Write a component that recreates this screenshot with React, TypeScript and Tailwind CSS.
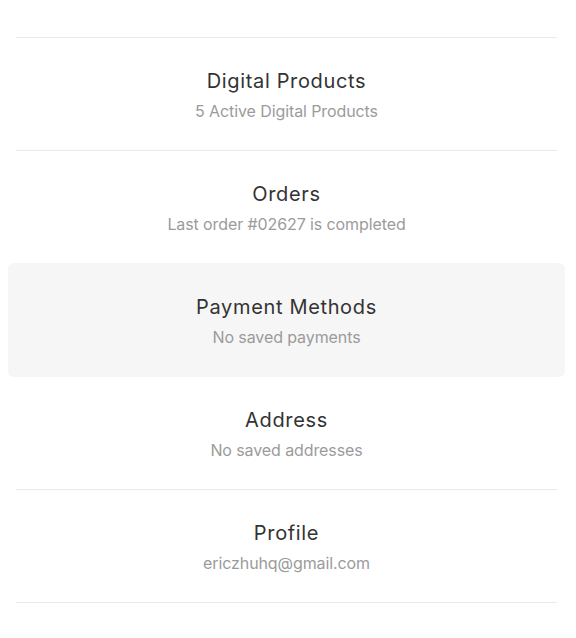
import React from "react";

type Item = { title: string; sub: string; active?: boolean };

const items: Item[] = [
  { title: "Digital Products", sub: "5 Active Digital Products" },
  { title: "Orders", sub: "Last order #02627 is completed" },
  { title: "Payment Methods", sub: "No saved payments", active: true },
  { title: "Address", sub: "No saved addresses" },
  { title: "Profile", sub: "ericzhuhq@gmail.com" },
];

function Content({ item }: { item: Item }) {
  return (
    <div className="flex flex-col items-center justify-center gap-1 h-full pt-[2px] cursor-pointer">
      <div className="text-[20px] leading-[28px] tracking-[0.65px] text-[#333333]">{item.title}</div>
      <div className="text-[16px] leading-[24px] tracking-[-0.1px] text-[#9b9b9b]">{item.sub}</div>
    </div>
  );
}

export default function App() {
  const nodes: React.ReactNode[] = [];
  items.forEach((item, i) => {
    const prevActive = i > 0 && items[i - 1].active;
    if (item.active) {
      nodes.push(
        <div key={i} className="h-[114px] rounded-md bg-[#f6f6f6] py-px">
          <Content item={item} />
        </div>
      );
    } else {
      if (!prevActive) nodes.push(<div key={`s${i}`} className="h-px mx-2 bg-[#ebebeb]" />);
      nodes.push(
        <div key={i} className="h-[112px]">
          <Content item={item} />
        </div>
      );
    }
  });
  nodes.push(<div key="end" className="h-px mx-2 bg-[#ebebeb]" />);

  return (
    <div
      className="min-h-[638px] bg-white pt-[37px] pl-2 pr-[11px]"
      style={{ fontFamily: "Inter, 'Noto Sans', sans-serif" }}
    >
      <div className="flex flex-col">{nodes}</div>
    </div>
  );
}
